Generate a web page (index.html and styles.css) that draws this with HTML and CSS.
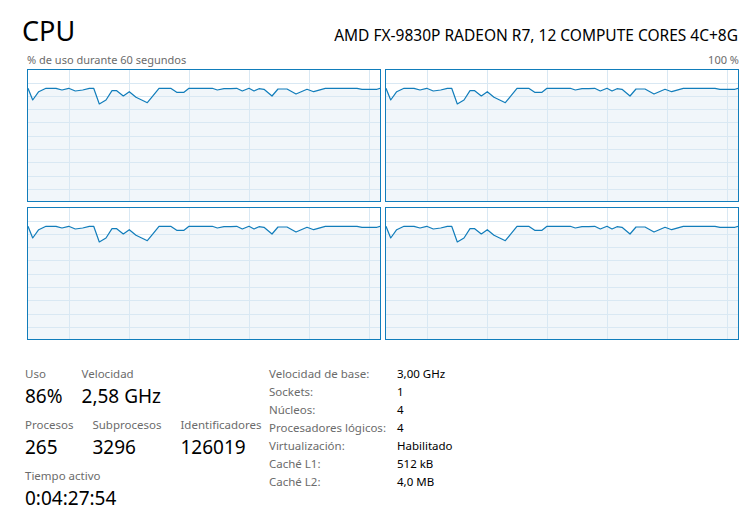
FILE: index.html
```html
<!DOCTYPE html>
<html lang="es">
<head>
<meta charset="utf-8">
<title>CPU</title>
<link rel="stylesheet" href="styles.css">
</head>
<body>
<div class="page">
  <div class="header">
    <div class="title">CPU</div>
    <div class="model">AMD FX-9830P RADEON R7, 12 COMPUTE CORES 4C+8G</div>
  </div>
  <div class="axis">
    <span>% de uso durante 60 segundos</span>
    <span>100 %</span>
  </div>
  <svg class="defs" width="0" height="0">
    <defs>
      <symbol id="graph" viewBox="0 0 352 131">
        <polygon class="fill" points="0,18.3 4.7,30 10.7,21.7 18,18.3 28,18.3 34,20 40.7,18.3 47.3,21 54.7,20 61.3,18.3 65.7,18.3 71.3,34 78,30 84,20.7 88.7,20.7 95.3,26 101.3,21.7 108,27.3 117.3,31.7 119.3,32.7 124.3,26.7 131,18.3 142.7,18.3 148.7,22.3 156,22.3 161,18.3 184.3,18.3 189.3,20 196,18.7 202.7,18.7 208.7,18.3 214.3,21 221,18.3 226,21 231,18.7 236,19.3 244,26 250,19 259,19 268,24 279,19.3 285.7,21.7 297.3,18.3 329,18.3 334,19.3 349,19.3 352,18.3 352,131 0,131"/>
        <g class="grid">
          <line x1="0" x2="352" y1="13.5" y2="13.5"/>
          <line x1="0" x2="352" y1="26.5" y2="26.5"/>
          <line x1="0" x2="352" y1="39.5" y2="39.5"/>
          <line x1="0" x2="352" y1="52.5" y2="52.5"/>
          <line x1="0" x2="352" y1="66.5" y2="66.5"/>
          <line x1="0" x2="352" y1="79.5" y2="79.5"/>
          <line x1="0" x2="352" y1="92.5" y2="92.5"/>
          <line x1="0" x2="352" y1="106.5" y2="106.5"/>
          <line x1="0" x2="352" y1="119.5" y2="119.5"/>
          <line y1="0" y2="131" x1="41.5" x2="41.5"/>
          <line y1="0" y2="131" x1="101.5" x2="101.5"/>
          <line y1="0" y2="131" x1="161.5" x2="161.5"/>
          <line y1="0" y2="131" x1="221.5" x2="221.5"/>
          <line y1="0" y2="131" x1="281.5" x2="281.5"/>
          <line y1="0" y2="131" x1="341.5" x2="341.5"/>
        </g>
        <polyline class="line" points="0,18.3 4.7,30 10.7,21.7 18,18.3 28,18.3 34,20 40.7,18.3 47.3,21 54.7,20 61.3,18.3 65.7,18.3 71.3,34 78,30 84,20.7 88.7,20.7 95.3,26 101.3,21.7 108,27.3 117.3,31.7 119.3,32.7 124.3,26.7 131,18.3 142.7,18.3 148.7,22.3 156,22.3 161,18.3 184.3,18.3 189.3,20 196,18.7 202.7,18.7 208.7,18.3 214.3,21 221,18.3 226,21 231,18.7 236,19.3 244,26 250,19 259,19 268,24 279,19.3 285.7,21.7 297.3,18.3 329,18.3 334,19.3 349,19.3 352,18.3"/>
      </symbol>
    </defs>
  </svg>
  <div class="graphs">
    <div class="panel"><svg viewBox="0 0 352 131"><use href="#graph"/></svg></div>
    <div class="panel"><svg viewBox="0 0 352 131"><use href="#graph"/></svg></div>
    <div class="panel"><svg viewBox="0 0 352 131"><use href="#graph"/></svg></div>
    <div class="panel"><svg viewBox="0 0 352 131"><use href="#graph"/></svg></div>
  </div>
  <div class="stats">
    <div class="left">
      <div class="row">
        <div class="stat"><div class="label">Uso</div><div class="value">86%</div></div>
        <div class="stat"><div class="label">Velocidad</div><div class="value">2,58 GHz</div></div>
      </div>
      <div class="row">
        <div class="stat"><div class="label">Procesos</div><div class="value">265</div></div>
        <div class="stat"><div class="label">Subprocesos</div><div class="value">3296</div></div>
        <div class="stat"><div class="label">Identificadores</div><div class="value">126019</div></div>
      </div>
      <div class="row">
        <div class="stat"><div class="label">Tiempo activo</div><div class="value">0:04:27:54</div></div>
      </div>
    </div>
    <div class="specs">
      <div class="k">Velocidad de base:</div><div class="v">3,00 GHz</div>
      <div class="k">Sockets:</div><div class="v">1</div>
      <div class="k">Núcleos:</div><div class="v">4</div>
      <div class="k">Procesadores lógicos:</div><div class="v">4</div>
      <div class="k">Virtualización:</div><div class="v">Habilitado</div>
      <div class="k">Caché L1:</div><div class="v">512 kB</div>
      <div class="k">Caché L2:</div><div class="v">4,0 MB</div>
    </div>
  </div>
</div>
</body>
</html>
```
FILE: styles.css
```css
html, body {
  margin: 0;
  padding: 0;
  background: #ffffff;
}
body {
  font-family: "Noto Sans", "Open Sans", sans-serif;
  color: #000;
}
.page {
  width: 756px;
  height: 520px;
  overflow: hidden;
}
.header {
  display: flex;
  justify-content: space-between;
  align-items: baseline;
  padding: 14px 18px 0 22px;
}
.title {
  font-size: 27px;
  line-height: 34px;
}
.model {
  font-size: 15.5px;
  line-height: 20px;
}
.axis {
  display: flex;
  justify-content: space-between;
  margin: 5px 17px 0 27px;
  font-size: 11px;
  line-height: 14px;
  color: #6b6b6b;
}
.defs {
  position: absolute;
  width: 0;
  height: 0;
}
.fill { fill: #f1f6fa; }
.grid line { stroke: #d9e8f3; stroke-width: 1; }
.line { fill: none; stroke: #117dbb; stroke-width: 1.2; stroke-linejoin: round; }
.graphs {
  display: grid;
  grid-template-columns: 354px 354px;
  grid-template-rows: 133px 133px;
  column-gap: 4px;
  row-gap: 5px;
  margin: 2px 0 0 27px;
}
.panel {
  border: 1px solid #117dbb;
  box-sizing: border-box;
  background: #fff;
}
.panel svg {
  display: block;
  width: 100%;
  height: 100%;
}
.stats {
  display: flex;
  margin-top: 26px;
  padding-left: 25px;
}
.left {
  width: 244px;
}
.row {
  display: flex;
  gap: 19px;
  margin-bottom: 6px;
}
.label {
  font-size: 11.5px;
  line-height: 16px;
  color: #6b6b6b;
}
.value {
  font-size: 19px;
  line-height: 29px;
}
.specs {
  display: grid;
  grid-template-columns: 128px auto;
  grid-auto-rows: 18px;
  font-size: 11.5px;
  line-height: 18px;
  margin-top: -1px;
}
.k { color: #6b6b6b; }
.v { color: #000; }
```
